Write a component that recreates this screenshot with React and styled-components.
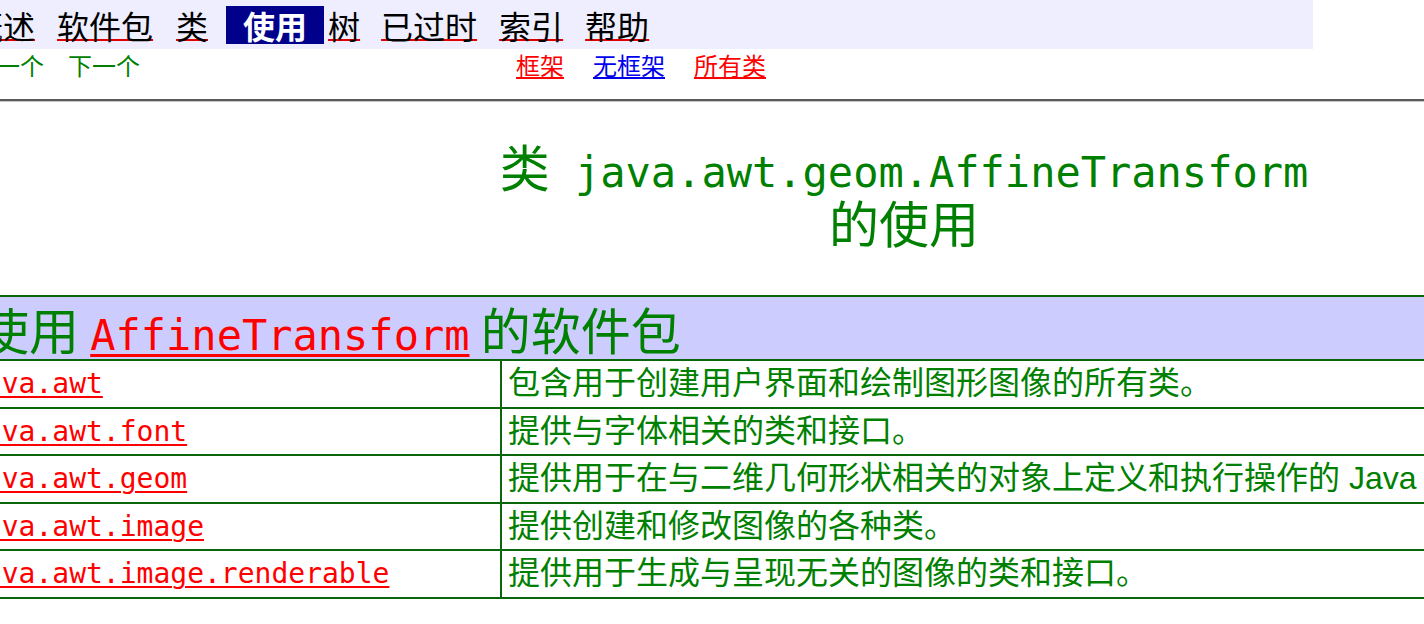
import React from "react";
import styled, { createGlobalStyle } from "styled-components";

const GlobalStyle = createGlobalStyle`
  html, body {
    margin: 0;
    padding: 0;
    overflow: hidden;
    background: #ffffff;
  }
  body {
    font-family: "Noto Sans CJK SC", sans-serif;
  }
`;

const Page = styled.div`
  width: 1880px;
  margin-left: -36px;
`;

const NavBar = styled.nav`
  box-sizing: border-box;
  width: 1349px;
  height: 49px;
  padding-left: 7px;
  display: flex;
  align-items: center;
  background: #eeeeff;
`;

const NavLink = styled.a`
  font-size: 32px;
  line-height: 38px;
  color: #000000;
  text-decoration: underline;
  text-decoration-color: #e00000;
  text-decoration-thickness: 2px;
  text-underline-offset: 0px;
  margin-right: ${(p) => (p.$gap ?? 22)}px;
  cursor: pointer;
`;

const NavActive = styled.span`
  font-size: 32px;
  line-height: 38px;
  font-weight: 700;
  color: #ffffff;
  background: #00008b;
  padding: 0 17px;
  margin-left: -2px;
  margin-right: 4px;
`;

const SubNav = styled.div`
  display: grid;
  grid-template-columns: 544px auto;
  height: 50px;
  padding-left: 8px;
`;

const SubGroup = styled.div`
  display: flex;
  gap: ${(p) => p.$gap}px;
  font-size: 24px;
  line-height: 32px;
`;

const PlainNav = styled.span`
  color: #008000;
`;

const FrameLink = styled.a`
  color: ${(p) => p.$color};
  text-decoration: underline;
  text-decoration-color: ${(p) => p.$color};
  text-decoration-thickness: 2px;
  text-underline-offset: 2px;
  cursor: pointer;
`;

const Rule = styled.hr`
  margin: 0;
  height: 0;
  border: none;
  border-top: 2px solid #5a5a5a;
  border-bottom: 1px solid #c4c4c4;
`;

const Title = styled.h2`
  margin: 36px 0 0;
  text-align: center;
  font-size: 50px;
  line-height: 55px;
  font-weight: 400;
  color: #008000;
`;

const TitleLine = styled.span`
  display: block;
  white-space: nowrap;
`;

const Mono = styled.span`
  font-family: "DejaVu Sans Mono", monospace;
  font-size: 0.84em;
  line-height: 1;
`;

const Table = styled.table`
  width: 100%;
  margin-top: 46px;
  border-collapse: collapse;
`;

const HeadCell = styled.th`
  border: 2px solid #0b650b;
  background: #ccccff;
  text-align: left;
  padding: 0 0 0 13px;
  font-size: 50px;
  line-height: 62px;
  font-weight: 400;
  color: #008000;
  white-space: nowrap;
`;

const HeadLink = styled.a`
  font-family: "DejaVu Sans Mono", monospace;
  font-size: 42px;
  line-height: 1;
  color: #ff0000;
  text-decoration: underline;
  text-decoration-thickness: 3px;
  text-underline-offset: 4px;
  cursor: pointer;
`;

const NameCell = styled.td`
  width: 532px;
  border: 2px solid #0b650b;
  padding: 0 0 0 2px;
  line-height: 45.5px;
  font-family: "DejaVu Sans Mono", monospace;
  font-size: 28px;
  white-space: nowrap;
`;

const PkgLink = styled.a`
  color: #ff0000;
  text-decoration: underline;
  text-decoration-thickness: 2px;
  text-underline-offset: 3px;
  cursor: pointer;
`;

const DescCell = styled.td`
  border: 2px solid #0b650b;
  padding: 0 0 0 6px;
  line-height: 45.5px;
  font-family: "Liberation Sans", "Noto Sans CJK SC", sans-serif;
  font-size: 32px;
  color: #008000;
  white-space: nowrap;
`;

const navItems = [
  { label: "概述" },
  { label: "软件包", gap: 23 },
  { label: "类", gap: 20 },
  { label: "使用", active: true },
  { label: "树", gap: 21 },
  { label: "已过时" },
  { label: "索引" },
  { label: "帮助" },
];

const packages = [
  ["java.awt", "包含用于创建用户界面和绘制图形图像的所有类。"],
  ["java.awt.font", "提供与字体相关的类和接口。"],
  [
    "java.awt.geom",
    "提供用于在与二维几何形状相关的对象上定义和执行操作的 Java 2D 类。",
  ],
  ["java.awt.image", "提供创建和修改图像的各种类。"],
  ["java.awt.image.renderable", "提供用于生成与呈现无关的图像的类和接口。"],
];

export default function App() {
  return (
    <>
      <GlobalStyle />
      <Page>
        <NavBar>
          {navItems.map((item) =>
            item.active ? (
              <NavActive key={item.label}>{item.label}</NavActive>
            ) : (
              <NavLink key={item.label} $gap={item.gap}>
                {item.label}
              </NavLink>
            )
          )}
        </NavBar>
        <SubNav>
          <SubGroup $gap={24}>
            <PlainNav>上一个</PlainNav>
            <PlainNav>下一个</PlainNav>
          </SubGroup>
          <SubGroup $gap={29}>
            <FrameLink $color="#ff0000">框架</FrameLink>
            <FrameLink $color="#0000ee">无框架</FrameLink>
            <FrameLink $color="#ff0000">所有类</FrameLink>
          </SubGroup>
        </SubNav>
        <Rule />
        <Title>
          <TitleLine>
            类<Mono> java.awt.geom.AffineTransform</Mono>
          </TitleLine>
          <TitleLine>的使用</TitleLine>
        </Title>
        <Table>
          <thead>
            <tr>
              <HeadCell colSpan={2}>
                使用 <HeadLink>AffineTransform</HeadLink> 的软件包
              </HeadCell>
            </tr>
          </thead>
          <tbody>
            {packages.map(([name, desc]) => (
              <tr key={name}>
                <NameCell>
                  <PkgLink>{name}</PkgLink>
                </NameCell>
                <DescCell>{desc}</DescCell>
              </tr>
            ))}
          </tbody>
        </Table>
      </Page>
    </>
  );
}
